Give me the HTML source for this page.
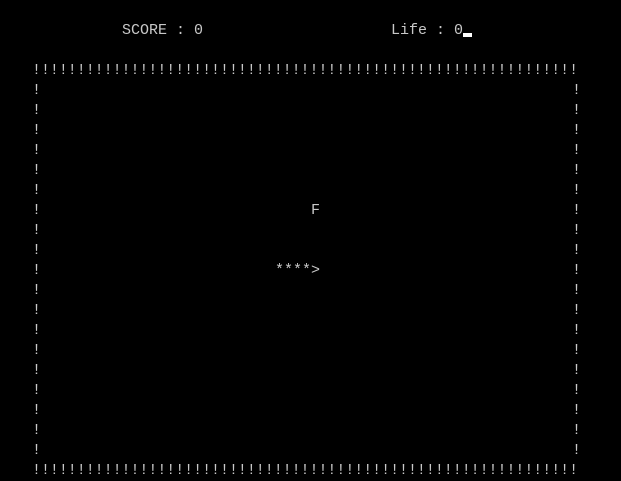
<!DOCTYPE html>
<html><head><meta charset="utf-8"><style>
html,body{margin:0;padding:0;background:#000;width:621px;height:478px;overflow:hidden}
.t{position:absolute;font-family:"Liberation Mono",monospace;font-size:15px;line-height:20px;color:#c8c8c8;white-space:pre;margin:0}
.b{transform:scaleX(0.9945);transform-origin:0 0}
.cur{display:inline-block;width:9px;height:4px;background:#fff;vertical-align:-3px}
</style></head><body>
<div class="t" style="left:122px;top:21px">SCORE : 0</div>
<div class="t" style="left:391px;top:21px">Life : 0<span class="cur"></span></div>
<div class="t b" style="left:32px;top:61px">!!!!!!!!!!!!!!!!!!!!!!!!!!!!!!!!!!!!!!!!!!!!!!!!!!!!!!!!!!!!!</div>
<div class="t b" style="left:32px;top:461px">!!!!!!!!!!!!!!!!!!!!!!!!!!!!!!!!!!!!!!!!!!!!!!!!!!!!!!!!!!!!!</div>
<div class="t" style="left:32px;top:81px">!
!
!
!
!
!
!
!
!
!
!
!
!
!
!
!
!
!
!</div>
<div class="t" style="left:572px;top:81px">!
!
!
!
!
!
!
!
!
!
!
!
!
!
!
!
!
!
!</div>
<div class="t" style="left:311px;top:201px">F</div>
<div class="t" style="left:275px;top:261px">****&gt;</div>
</body></html>
